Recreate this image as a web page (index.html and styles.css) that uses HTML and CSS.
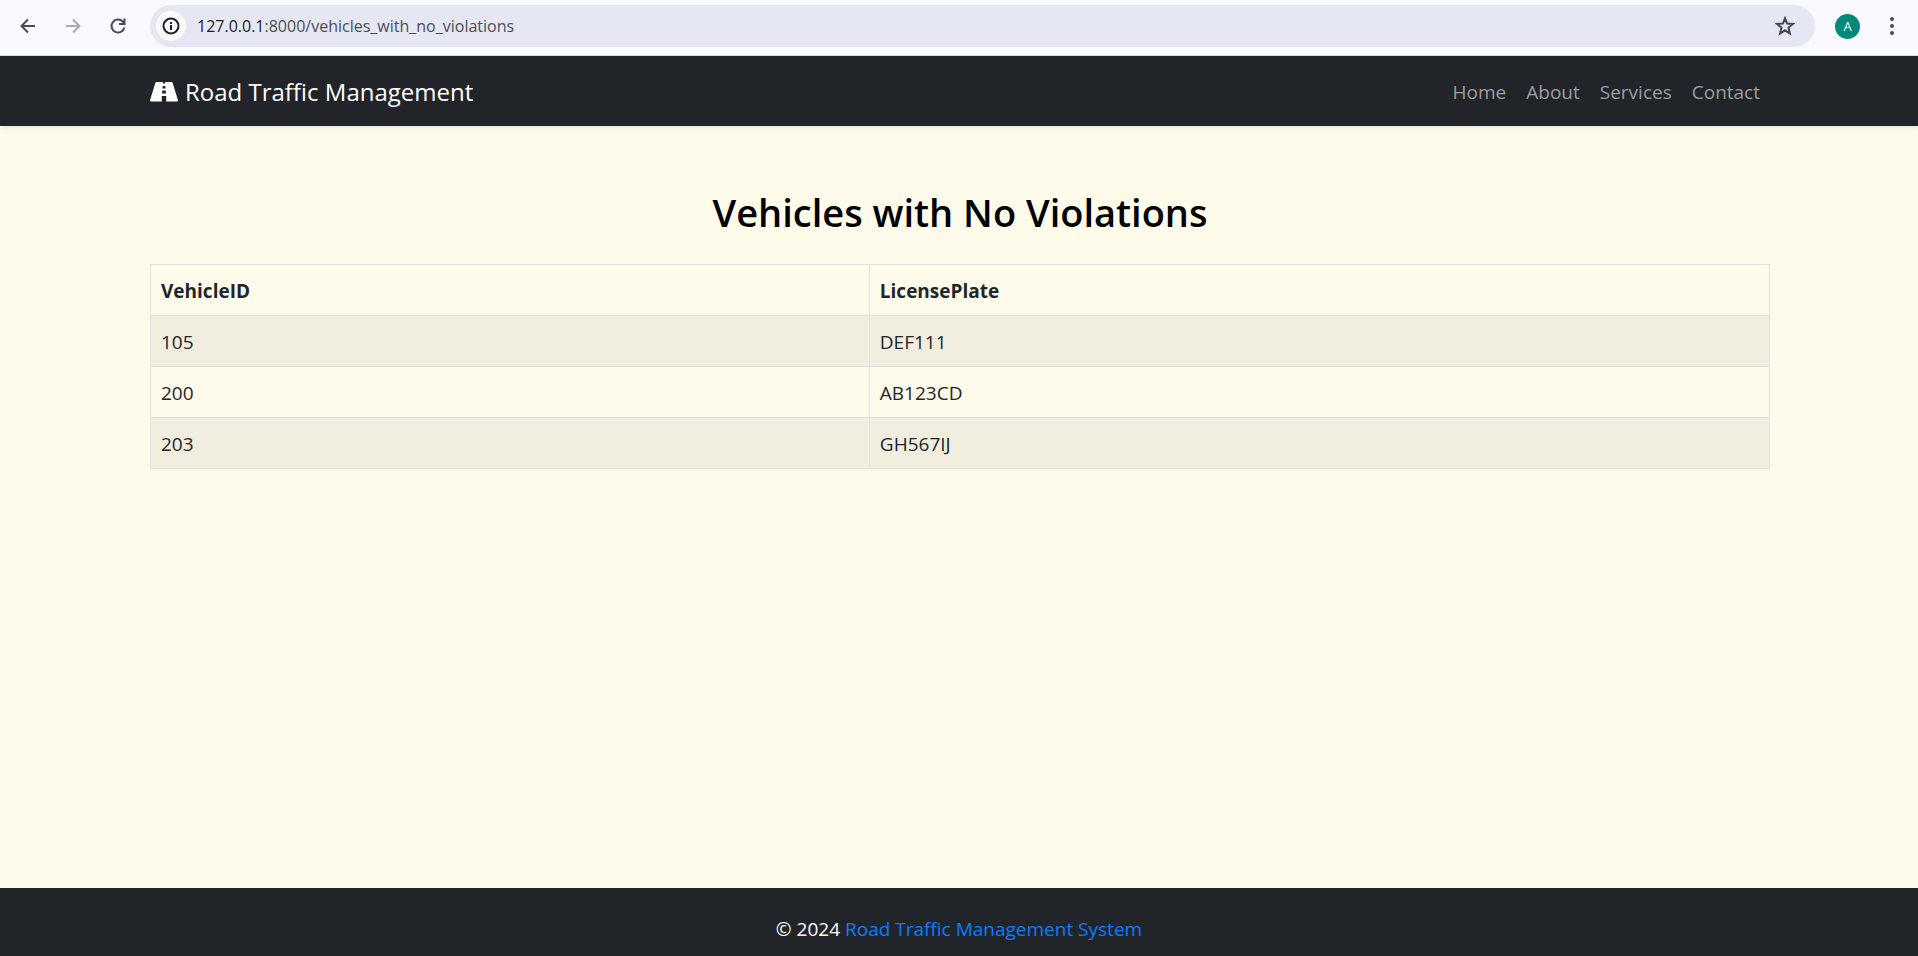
FILE: index.html
```html
<!DOCTYPE html>
<html lang="en">
<head>
<meta charset="utf-8">
<meta name="viewport" content="width=device-width, initial-scale=1">
<title>Vehicles with No Violations</title>
<link rel="stylesheet" href="styles.css">
</head>
<body>
<div class="browser-bar">
  <div class="browser-nav">
    <button class="icon-button" type="button" aria-label="Back"><svg viewBox="0 0 20 20" width="20" height="20"><path d="M17 10H4M10 3.5 3.5 10l6.500 6.500"/></svg></button>
    <button class="icon-button icon-button-off" type="button" aria-label="Forward"><svg viewBox="0 0 20 20" width="20" height="20"><path d="M3 10h13M10 3.500 16.500 10 10 16.500"/></svg></button>
    <button class="icon-button" type="button" aria-label="Reload"><svg viewBox="0 0 20 20" width="20" height="20"><path d="M16.400 11.500A6.500 6.500 0 1 1 14.900 5.700L16.500 7.500M16.500 2.500V8H11"/></svg></button>
  </div>
  <div class="address">
    <button class="site-info" type="button" aria-label="View site information"><svg viewBox="0 0 20 20" width="20" height="20"><circle cx="10" cy="10" r="7.500"/><path d="M10 9v5M10 6v2"/></svg></button>
    <div class="url"><span class="url-host">127.0.0.1</span>:8000/vehicles_with_no_violations</div>
    <button class="bookmark" type="button" aria-label="Bookmark this page"><svg viewBox="0 0 20 20" width="20" height="20"><path d="m10 2.300 2.100 5.200 5.900.4-4.500 3.700 1.400 5.900L10 14.300l-4.900 3.200 1.400-5.900L2 7.900l5.900-.4z"/></svg></button>
  </div>
  <button class="avatar" type="button" aria-label="Profile A">A</button>
  <button class="more" type="button" aria-label="More"><svg viewBox="0 0 20 20" width="20" height="20"><circle cx="10" cy="3" r="2"/><circle cx="10" cy="10" r="2"/><circle cx="10" cy="17" r="2"/></svg></button>
</div>
<header class="navbar">
  <div class="container navbar-inner">
    <a class="brand" href="#"><svg class="road" viewBox="0 0 28 20" width="28" height="20"><path fill-rule="evenodd" d="M6.800 0H12.900V1.500H15.100V0H21.200Q22.300 0 22.700 1L27.900 18Q28.200 19.500 26.700 19.500H16.200V14H11.800V19.500H1.300Q-.2 19.500.1 18L5.300 1Q5.700 0 6.800 0ZM12.700 4 12.500 6.500H15.500L15.300 4ZM12.300 8.500 12 11.500H16L15.700 8.500Z"/></svg>Road Traffic Management</a>
    <nav class="links">
      <a href="#">Home</a>
      <a href="#">About</a>
      <a href="#">Services</a>
      <a href="#">Contact</a>
    </nav>
  </div>
</header>
<main class="container content">
  <h1>Vehicles with No Violations</h1>
  <table class="vehicles">
    <colgroup><col class="col-id"><col></colgroup>
    <thead><tr><th scope="col">VehicleID</th><th scope="col">LicensePlate</th></tr></thead>
    <tbody>
      <tr><td>105</td><td>DEF111</td></tr>
      <tr><td>200</td><td>AB123CD</td></tr>
      <tr><td>203</td><td>GH567IJ</td></tr>
    </tbody>
  </table>
</main>
<footer class="footer">© 2024 <a href="#">Road Traffic Management System</a></footer>
</body>
</html>
```
FILE: styles.css
```css
* { box-sizing: border-box; }

body {
  margin: 0;
  min-height: 100vh;
  display: flex;
  flex-direction: column;
  background: #fffbeb;
  color: #212529;
  font-family: "Open Sans", "Noto Sans", sans-serif;
  font-size: 19px;
  line-height: 30px;
}

button {
  padding: 0;
  border: 0;
  background: none;
  font-family: inherit;
}

svg { display: block; }

.browser-bar {
  display: flex;
  align-items: center;
  height: 56px;
  padding: 0 16px 3px 18px;
  background: #faf9ff;
  border-bottom: 1px solid #dfe0e6;
}

.browser-nav {
  display: flex;
  gap: 25px;
  margin-right: 22px;
}

.icon-button svg {
  fill: none;
  stroke: #434b5d;
  stroke-width: 2;
}

.icon-button-off svg { stroke: #a9aaae; }

.address {
  flex: 1;
  display: flex;
  align-items: center;
  height: 42px;
  padding: 0 20px 0 6px;
  border-radius: 21px;
  background: #e5e8f3;
}

.site-info {
  display: grid;
  place-items: center;
  width: 30px;
  height: 30px;
  border-radius: 50%;
  background: #faf9ff;
}

.site-info svg {
  fill: none;
  stroke: #1f2024;
  stroke-width: 2;
}

.url {
  flex: 1;
  margin-left: 11px;
  color: #4b4e54;
  font-size: 16px;
}

.url-host { color: #1f2024; }

.bookmark svg {
  fill: none;
  stroke: #44474d;
  stroke-width: 2;
}

.avatar {
  width: 25px;
  height: 25px;
  margin: 0 22px 0 20px;
  border-radius: 50%;
  background: #00897b;
  color: #fff;
  font-size: 13px;
}

.more svg { fill: #434b5d; }

.container {
  width: 100%;
  max-width: 1650px;
  margin: 0 auto;
  padding: 0 14px 0 16px;
}

.navbar {
  background: #212529;
  box-shadow: 0 2px 4px rgba(0, 0, 0, 0.08);
}

.navbar-inner {
  display: flex;
  align-items: center;
  justify-content: space-between;
  height: 70px;
}

.brand {
  display: flex;
  align-items: center;
  gap: 7px;
  padding-top: 1px;
  color: #fff;
  font-size: 24px;
  text-decoration: none;
}

.road { fill: #fff; }

.links {
  display: flex;
  gap: 20px;
  padding: 2px 10px 0 0;
}

.links a {
  color: #9b9d9f;
  text-decoration: none;
}

.content { flex: 1; }

h1 {
  margin: 62px 0 28px;
  color: #000;
  font-size: 38px;
  font-weight: 600;
  line-height: 48px;
  text-align: center;
}

.vehicles {
  width: 100%;
  border-collapse: collapse;
  text-align: left;
}

.col-id { width: 44.4%; }

.vehicles th,
.vehicles td {
  padding: 11px 10px 9px;
  border: 1px solid #dee2e6;
}

.vehicles th { font-weight: 700; }

.vehicles tbody tr:nth-child(odd) { background: #f2eedf; }

.footer {
  padding: 26px 0 12px;
  background: #212529;
  color: #fff;
  text-align: center;
}

.footer a {
  color: #0d7bff;
  text-decoration: none;
}
```
